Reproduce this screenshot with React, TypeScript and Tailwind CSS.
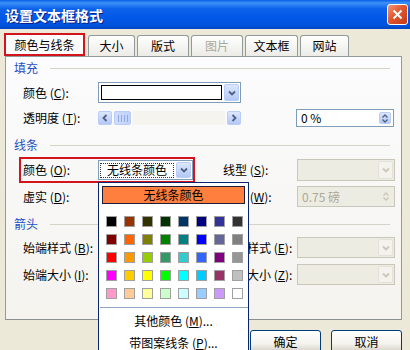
import React from "react";

const palette = [
  ["#000000", "#993300", "#333300", "#003300", "#003366", "#000080", "#333399", "#333333"],
  ["#800000", "#FF6600", "#808000", "#008000", "#008080", "#0000FF", "#666699", "#808080"],
  ["#FF0000", "#FF9900", "#99CC00", "#339966", "#33CCCC", "#3366FF", "#800080", "#969696"],
  ["#FF00FF", "#FFCC00", "#FFFF00", "#00FF00", "#00FFFF", "#00CCFF", "#993366", "#C0C0C0"],
  ["#FF99CC", "#FFCC99", "#FFFF99", "#CCFFCC", "#CCFFFF", "#99CCFF", "#CC99FF", "#FFFFFF"],
];

function Chevron({ dir = "down", color }: { dir?: "down" | "up" | "left" | "right"; color: string }) {
  const d = {
    down: "M1 1.5 L4 4.5 L7 1.5",
    up: "M1 4.5 L4 1.5 L7 4.5",
    left: "M4.5 1 L1.5 4 L4.5 7",
    right: "M1.5 1 L4.5 4 L1.5 7",
  }[dir];
  const vertical = dir === "up" || dir === "down";
  return (
    <svg width={vertical ? 8 : 6} height={vertical ? 6 : 8} viewBox={vertical ? "0 0 8 6" : "0 0 6 8"}>
      <path d={d} fill="none" stroke={color} strokeWidth="1.8" />
    </svg>
  );
}

function DropBtn({ disabled }: { disabled?: boolean }) {
  return (
    <div
      className={
        disabled
          ? "w-[15px] h-full rounded-[2px] border border-[#E4E2D8] bg-[#F3F2EC] flex items-center justify-center"
          : "w-[15px] h-full rounded-[2px] border border-[#B9CDF7] bg-[linear-gradient(#DCE6FD,#B4C8F6)] flex items-center justify-center"
      }
    >
      <Chevron color={disabled ? "#C9C7BA" : "#4D6185"} />
    </div>
  );
}

function DisabledCombo() {
  return (
    <div className="w-[98px] h-full border border-[#C9C7BA] bg-[#EDECE3] flex justify-end p-[1px]">
      <DropBtn disabled />
    </div>
  );
}

function Header({ text, mt }: { text: string; mt: string }) {
  return (
    <div className={`${mt} h-[16px] flex items-center pl-[8px] pr-[11px]`}>
      <span className="text-[#1F4FC6]">{text}</span>
      <div className="flex-1 h-px bg-[#D5D3C6] ml-[12px]" />
    </div>
  );
}

export default function App() {
  return (
    <div className="w-[410px] h-[350px] overflow-hidden relative bg-[#ECE9D8] text-[12px] leading-none text-black font-['Noto_Sans_CJK_SC','Noto_Sans',sans-serif]">
      {/* title bar */}
      <div className="h-[29px] flex items-center justify-between pl-[5px] pr-[2px] bg-[linear-gradient(180deg,#0A5FE8_0%,#3D91F8_10%,#0C62EA_30%,#0057E6_65%,#0053DC_88%,#0046C2_100%)]">
        <span className="text-white font-bold text-[14px] [text-shadow:1px_1px_#0A1F8A]">设置文本框格式</span>
        <div className="w-[21px] h-[21px] rounded-[3px] border border-white bg-[linear-gradient(135deg,#F09878,#E0572F_45%,#C43A15)] flex items-center justify-center">
          <svg width="11" height="11" viewBox="0 0 11 11">
            <path d="M1.5 1.5 L9.5 9.5 M9.5 1.5 L1.5 9.5" stroke="white" strokeWidth="2" />
          </svg>
        </div>
      </div>

      {/* tabs */}
      <div className="mt-[4px] h-[23px] flex items-end pl-[4px]">
        <div className="w-[81px] h-[23px] border-2 border-[#D4141C] bg-[#FCFCFE] flex items-center justify-center">颜色与线条</div>
        <div className="ml-[3px] flex items-end gap-[2px]">
          <div className="w-[47px] h-[21px] border border-b-0 border-[#919B9C] rounded-t-[3px] bg-[linear-gradient(#FFFFFF,#ECEBE6)] flex items-center justify-center">大小</div>
          <div className="w-[52px] h-[21px] border border-b-0 border-[#919B9C] rounded-t-[3px] bg-[linear-gradient(#FFFFFF,#ECEBE6)] flex items-center justify-center">版式</div>
          <div className="w-[52px] h-[21px] border border-b-0 border-[#919B9C] rounded-t-[3px] bg-[linear-gradient(#FFFFFF,#ECEBE6)] flex items-center justify-center text-[#ACA899]">图片</div>
          <div className="w-[53px] h-[21px] border border-b-0 border-[#919B9C] rounded-t-[3px] bg-[linear-gradient(#FFFFFF,#ECEBE6)] flex items-center justify-center">文本框</div>
          <div className="w-[49px] h-[21px] border border-b-0 border-[#919B9C] rounded-t-[3px] bg-[linear-gradient(#FFFFFF,#ECEBE6)] flex items-center justify-center">网站</div>
        </div>
      </div>

      {/* panel */}
      <div className="ml-[5px] w-[397px] h-[264px] border border-[#919B9C] border-b-[#8A9091] bg-[linear-gradient(#FCFCFE,#F4F3EE)] flex flex-col">
        <Header text="填充" mt="mt-[3px]" />

        <div className="mt-[6px] h-[21px] flex items-center">
          <span className="ml-[17px] w-[75px]">颜色 (<u>C</u>):</span>
          <div className="w-[143px] h-full border border-[#7F9DB9] bg-white flex items-center p-[1px] gap-[2px]">
            <div className="flex-1 h-[15px] ml-[1px] border border-black bg-white" />
            <DropBtn />
          </div>
        </div>

        <div className="mt-[6px] h-[18px] flex items-center">
          <span className="ml-[17px] w-[75px]">透明度 (<u>T</u>):</span>
          <div className="w-[143px] h-[14px] flex items-center gap-[2px]">
            <div className="w-[14px] h-full rounded-[2px] border border-[#B9CDF7] bg-[linear-gradient(#DCE6FD,#B4C8F6)] flex items-center justify-center">
              <Chevron dir="left" color="#4D6185" />
            </div>
            <div className="w-[17px] h-full rounded-[2px] border border-[#B9CDF7] bg-[linear-gradient(90deg,#D0DCFB,#C1D2FA)] flex items-center justify-center gap-[2px]">
              <div className="w-px h-[7px] bg-[#8FA9E6]" />
              <div className="w-px h-[7px] bg-[#8FA9E6]" />
              <div className="w-px h-[7px] bg-[#8FA9E6]" />
              <div className="w-px h-[7px] bg-[#8FA9E6]" />
            </div>
            <div className="flex-1 h-full bg-[#F5F4EF]" />
            <div className="w-[14px] h-full rounded-[2px] border border-[#B9CDF7] bg-[linear-gradient(#DCE6FD,#B4C8F6)] flex items-center justify-center">
              <Chevron dir="right" color="#4D6185" />
            </div>
          </div>
          <div className="ml-[55px] w-[98px] h-full border border-[#7F9DB9] bg-white flex items-center justify-between pl-[4px] p-[2px]">
            <span>0 %</span>
            <div className="w-[12px] h-full rounded-[2px] border border-[#B9CDF7] bg-[linear-gradient(#DCE6FD,#B4C8F6)] flex flex-col items-center justify-center gap-[1px]">
              <svg width="6" height="4" viewBox="0 0 6 4"><path d="M0.5 3.5 L3 1 L5.5 3.5" fill="none" stroke="#4D6185" strokeWidth="1.4" /></svg>
              <svg width="6" height="4" viewBox="0 0 6 4"><path d="M0.5 0.5 L3 3 L5.5 0.5" fill="none" stroke="#4D6185" strokeWidth="1.4" /></svg>
            </div>
          </div>
        </div>

        <Header text="线条" mt="mt-[10px]" />

        <div className="mt-[6px] h-[22px] flex items-center">
          <div className="ml-[13px] w-[176px] h-[26px] -my-[2px] border-2 border-[#D4141C] flex items-center">
            <span className="pl-[2px] w-[77px]">颜色 (<u>O</u>):</span>
            <div className="w-[95px] h-[20px] border border-[#7F9DB9] bg-white flex items-center p-[1px] gap-[2px]">
              <div className="flex-1 h-[15px] border border-dotted border-[#333] bg-white flex items-center justify-center">无线条颜色</div>
              <DropBtn />
            </div>
          </div>
          <span className="ml-[28px] w-[74px]">线型 (<u>S</u>):</span>
          <DisabledCombo />
        </div>

        <div className="mt-[5px] h-[21px] flex items-center">
          <span className="ml-[17px] w-[75px]">虚实 (<u>D</u>):</span>
          <div className="w-[96px] h-full border border-[#7F9DB9] bg-white" />
          <span className="ml-[29px] w-[74px]">粗细 (<u>W</u>):</span>
          <div className="w-[98px] h-full border border-[#C9C7BA] bg-[#EDECE3] flex items-center justify-between pl-[4px] p-[2px] text-[#ACA899]">
            <span>0.75 磅</span>
            <div className="w-[12px] h-full flex flex-col items-center justify-center gap-[1px]">
              <svg width="6" height="4" viewBox="0 0 6 4"><path d="M0.5 3.5 L3 1 L5.5 3.5" fill="none" stroke="#C9C7BA" strokeWidth="1.4" /></svg>
              <svg width="6" height="4" viewBox="0 0 6 4"><path d="M0.5 0.5 L3 3 L5.5 0.5" fill="none" stroke="#C9C7BA" strokeWidth="1.4" /></svg>
            </div>
          </div>
        </div>

        <Header text="箭头" mt="mt-[9px]" />

        <div className="mt-[5px] h-[21px] flex items-center">
          <span className="ml-[17px] w-[75px]">始端样式 (<u>B</u>):</span>
          <div className="w-[96px] h-full border border-[#C9C7BA] bg-[#EDECE3]" />
          <span className="ml-[29px] w-[74px]">末端样式 (<u>E</u>):</span>
          <DisabledCombo />
        </div>

        <div className="mt-[6px] h-[21px] flex items-center">
          <span className="ml-[17px] w-[75px]">始端大小 (<u>I</u>):</span>
          <div className="w-[96px] h-full border border-[#C9C7BA] bg-[#EDECE3]" />
          <span className="ml-[29px] w-[74px]">末端大小 (<u>Z</u>):</span>
          <DisabledCombo />
        </div>
      </div>

      {/* buttons */}
      <div className="mt-[10px] flex justify-end pr-[8px] gap-[10px]">
        <button className="w-[71px] h-[23px] rounded-[3px] border border-[#003C74] bg-[linear-gradient(#FFFFFF,#F4F3EE_60%,#D6D0C5)] flex items-center justify-center">确定</button>
        <button className="w-[71px] h-[23px] rounded-[3px] border border-[#003C74] bg-[linear-gradient(#FFFFFF,#F4F3EE_60%,#D6D0C5)] flex items-center justify-center">取消</button>
      </div>

      {/* colour popup */}
      <div className="absolute left-[98px] top-[182px] w-[151px] h-[175px] bg-white border border-[#0A246A] flex flex-col">
        <div className="mt-[3px] ml-[3px] w-[143px] h-[18px] border border-[#1E1E3C] bg-[#FF7F3F] flex items-center justify-center">无线条颜色</div>
        <div className="mt-[12px] ml-[7px] grid grid-cols-[repeat(8,11px)] gap-[7px]">
          {palette.flat().map((c, i) => (
            <div key={i} className="w-[11px] h-[11px] border border-[#A0A0A0]" style={{ backgroundColor: c }} />
          ))}
        </div>
        <div className="mt-[8px] ml-[1px] h-px bg-[#8EA2C4]" />
        <div className="mt-[2px] h-[22px] flex items-center justify-center">其他颜色 (<u>M</u>)...</div>
        <div className="h-[22px] flex items-center justify-center">带图案线条 (<u>P</u>)...</div>
      </div>
    </div>
  );
}
